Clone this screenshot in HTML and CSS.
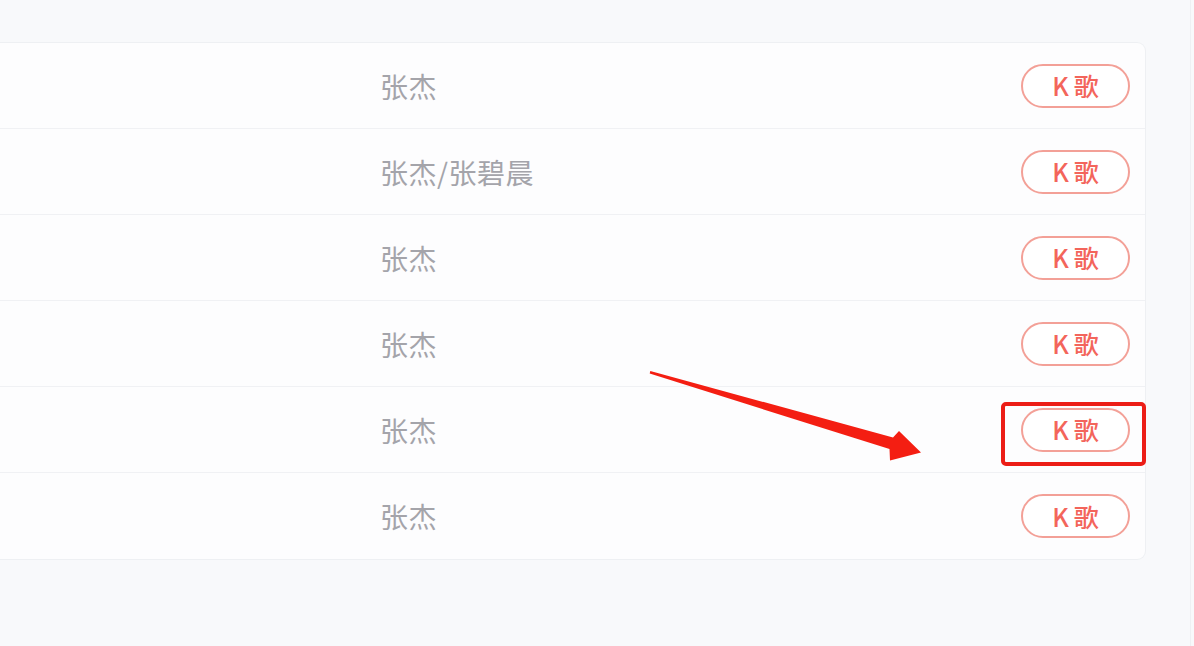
FILE: index.html
```html
<!DOCTYPE html>
<html lang="zh-CN">

<head>
  <meta charset="UTF-8" />
  <meta name="viewport" content="width=device-width, initial-scale=1.0" />
  <title>K歌</title>
  <link rel="stylesheet" href="styles.css">
</head>

<body>
  <div class="page">

    <div class="song-list">
      <div class="song-row">
        <p class="artist">张杰</p>
        <button class="k-button">K歌</button>
      </div>
      <div class="song-row">
        <p class="artist">张杰/张碧晨</p>
        <button class="k-button">K歌</button>
      </div>
      <div class="song-row">
        <p class="artist">张杰</p>
        <button class="k-button">K歌</button>
      </div>
      <div class="song-row">
        <p class="artist">张杰</p>
        <button class="k-button">K歌</button>
      </div>
      <div class="song-row">
        <p class="artist">张杰</p>
        <button class="k-button">K歌</button>
      </div>
      <div class="song-row">
        <p class="artist">张杰</p>
        <button class="k-button">K歌</button>
      </div>
    </div>

  </div>

  <!-- annotation drawn over the screenshot -->
  <div class="highlight-box"></div>
  <svg class="arrow" width="1194" height="646" viewBox="0 0 1194 646">
    <polygon fill="#f41e12"
      points="650.3,371 893,437.5 899,431 921,452.5 890,460.5 889.5,449 649.7,373.6" />
  </svg>
</body>

</html>
```

FILE: styles.css
```css
/* Base Reset */
* {
  margin: 0;
  padding: 0;
  box-sizing: border-box;
}

body {
  background-color: #f8f9fb;
  width: 1194px;
  height: 646px;
  overflow: hidden;
  font-family: 'Noto Sans CJK SC', 'Noto Sans', sans-serif;
}

.page {
  width: 1191px;
  height: 646px;
  padding-top: 42px;
  border-right: 1px solid #eef0f3;
}

/* Song list card */
.song-list {
  width: 1146px;
  background-color: #fdfdfe;
  border: 1px solid #eef0f3;
  border-left: none;
  border-radius: 0 9px 9px 0;
  display: flex;
  flex-direction: column;
}

.song-row {
  height: 86px;
  display: flex;
  align-items: center;
  padding-left: 380px;
  padding-right: 15px;
  border-bottom: 1px solid #f0f1f4;
}

.song-row:last-child {
  border-bottom: none;
}

.artist {
  flex: 1;
  font-size: 28px;
  color: #a4a4aa;
  letter-spacing: 0.5px;
}

.k-button {
  width: 109px;
  height: 44px;
  border: 2px solid #f3a097;
  border-radius: 22px;
  background-color: #fff;
  color: #f3655b;
  font-family: 'Noto Sans CJK SC', 'Noto Sans', sans-serif;
  font-size: 25px;
  font-weight: 500;
  line-height: 1;
  letter-spacing: 5px;
  padding-left: 5px;
  cursor: pointer;
}

/* Annotation */
.highlight-box {
  position: absolute;
  left: 1001px;
  top: 402px;
  width: 145px;
  height: 64px;
  border: 4px solid #ec1d16;
  border-radius: 5px;
}

.arrow {
  position: absolute;
  left: 0;
  top: 0;
}
```
